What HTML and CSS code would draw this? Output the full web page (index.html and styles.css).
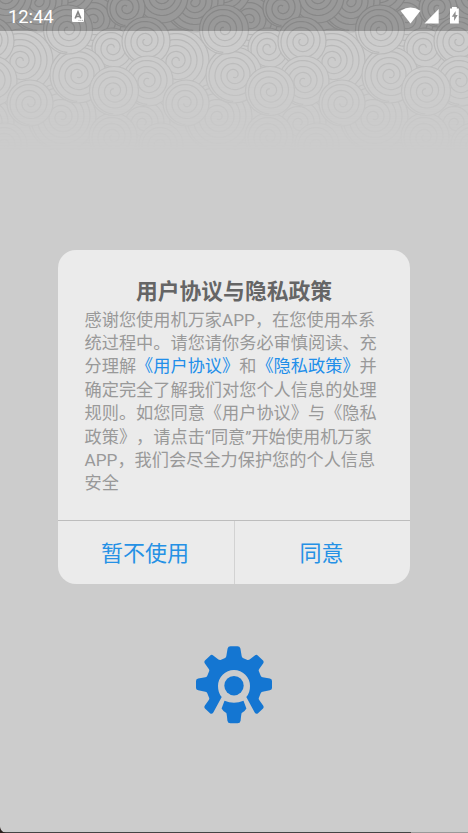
FILE: index.html
```html
<!DOCTYPE html>
<html lang="zh-CN">
<head>
<meta charset="utf-8">
<title>用户协议与隐私政策</title>
<link rel="stylesheet" href="styles.css">
</head>
<body>
<div class="screen">
  <svg class="swirls" width="468" height="160" viewBox="0 0 468 160" aria-hidden="true"></svg>
  <header class="status">
    <span class="time">12:44</span>
    <svg class="app-badge" width="12" height="13" viewBox="0 0 12 13">
      <rect width="12" height="13" rx="1" fill="#fff"/>
      <path d="M3.200 9.500 6 3 8.800 9.500M4.200 7.500h3.600" fill="none" stroke="#858585" stroke-width="1.700"/>
      <path d="M6.500 11.400h1M8.300 11.400h1M10.100 11.400h1" stroke="#999" stroke-width=".9"/>
    </svg>
    <svg class="signals" width="60" height="18" viewBox="0 0 60 18">
      <path d="M.6 3.700Q10.500-2.600 20.400 3.700L10.500 16.500Z" fill="#fff"/>
      <path d="M24.500 16.500 38.700 2V16.500Z" fill="#fff"/>
      <path d="M50 1.500h2V0h4.800v1.500h2V16.500H50Z" fill="#fff"/>
      <path d="M55.600 4 51.800 9.700h2.300v4.400l3.600-6.100h-2.100Z" fill="#909090"/>
    </svg>
  </header>
  <main class="dialog">
    <section class="content">
      <h1>用户协议与隐私政策</h1>
      <p>感谢您使用机万家APP，在您使用本系<br>统过程中。请您请你务必审慎阅读、充<br>分理解<a>《用户协议》</a>和<a>《隐私政策》</a>并<br>确定完全了解我们对您个人信息的处理<br>规则。如您同意《用户协议》与《隐私<br>政策》，请点击“同意”开始使用机万家<br>APP，我们会尽全力保护您的个人信息<br>安全</p>
    </section>
    <div class="actions">
      <button>暂不使用</button>
      <button>同意</button>
    </div>
  </main>
  <svg class="logo" width="76" height="78" viewBox="0 0 76 78" aria-hidden="true">
    <path fill="#1476d2" d="M34.500.3h7q2.300 0 2.900 2.300l1.300 7.700q.3 1.400 1.700 2l3.500 1.400q1.400.6 2.700-.2l5.200-4.100q1.700-1.200 3.200.3l4.800 4.600q1.500 1.500.3 3.200l-3.900 5.400q-.9 1.300-.2 2.700l1.600 4q.5 1.400 2 1.700l7.200 1.300q2.200.5 2.200 2.300v7q0 1.800-2.200 2.300l-7.200 1.500q-1.500.3-2 1.700l-1.600 4q-.7 1.400.2 2.700l3.900 5.400q1.200 1.700-.3 3.200l-4.800 4.600q-1.800 1.300-3.300-.7L50.300 51Q54 47 54 40A16 16 0 0 0 22 40Q22 47 25.700 51L17.300 66.600q-1.500 2-3.300.7L9.200 62.700q-1.500-1.500-.3-3.200l3.900-5.400q.9-1.300.2-2.700l-1.600-4q-.5-1.400-2-1.700L2.200 44.200Q0 43.700 0 41.900v-7q0-1.800 2.200-2.300l7.200-1.300q1.500-.3 2-1.700l1.600-4q.7-1.400-.2-2.700L8.900 17.500q-1.200-1.700.3-3.200l4.800-4.600q1.500-1.500 3.200-.3l5.200 4.100q1.300.8 2.700.2l3.500-1.400q1.400-.6 1.700-2l1.300-7.700Q32.200.3 34.500.3Z"/>
    <circle cx="38" cy="39.700" r="9.700" fill="#1476d2"/>
    <path fill="#1476d2" d="M28.500 54.800Q38 58.700 47.500 54.800L50.400 62.500Q48.800 65.500 45.700 67Q45.200 68 44.600 74.700Q44.200 77.200 41.500 77.200h-7Q31.800 77.200 31.400 74.700Q30.800 68 30.300 67Q27.200 65.500 25.600 62.500Z"/>
  </svg>
  <footer class="edge"></footer>
</div>
<script src="swirls.js"></script>
</body>
</html>
```
FILE: styles.css
```css
* { box-sizing: border-box; }
body { margin: 0; background: #ccc; font-family: Roboto, "Noto Sans CJK SC", sans-serif; }
.screen { position: relative; width: 468px; height: 833px; overflow: hidden; background: #ccc; display: flex; flex-direction: column; align-items: center; }
.swirls { position: absolute; left: 0; top: 0; -webkit-mask-image: linear-gradient(#000 10%, rgba(0,0,0,.65) 40%, rgba(0,0,0,.2) 75%, transparent 94%); mask-image: linear-gradient(#000 10%, rgba(0,0,0,.65) 40%, rgba(0,0,0,.2) 75%, transparent 94%); }
.status { position: relative; width: 100%; height: 31px; flex: none; display: flex; align-items: flex-start; padding: 6px 8px 0; background: rgba(0,0,0,.25); color: #fff; }
.time { width: 64px; font-size: 18.500px; line-height: 22px; font-weight: 400; letter-spacing: -.1px; }
.app-badge { margin-top: 3px; }
.signals { margin: 1px 0 0 auto; }
.dialog { position: relative; width: 352px; height: 333.500px; margin-top: 219px; flex: none; background: #ebebeb; border-radius: 18px; overflow: hidden; display: flex; flex-direction: column; }
.content { height: 270px; padding: 28px 0 0 26.500px; }
h1 { margin: 0 26.500px 0 0; text-align: center; font-size: 21.800px; line-height: 28px; font-weight: 700; color: #656565; }
p { margin: 2.600px 0 0; font-size: 17.200px; line-height: 23.400px; color: #999; white-space: nowrap; text-spacing-trim: space-all; }
a { color: #218eea; }
.actions { display: flex; flex: 1; border-top: 1px solid #bdbdbd; }
button { flex: 1; border: 0; padding: 3px 1.500px 0 0; margin: 0; background: none; color: #2591e5; font: 400 22px/30px Roboto, "Noto Sans CJK SC", sans-serif; }
button + button { border-left: 1px solid #d2d2d2; }
.logo { margin-top: 62px; flex: none; }
.edge { position: absolute; left: 0; bottom: 0; width: 100%; height: 7px; background: radial-gradient(circle at 7px 0, transparent 6.500px, #2b211e 7.500px) 0 0 / 6px 7px no-repeat, linear-gradient(90deg, #444 411px, #999 411px) 0 100% / 100% 1px no-repeat; }
```
FILE: swirls.js
```js
const svg = document.querySelector('.swirls');
const PERIOD = 156;
const PITCH = 6;
// Discs of one pattern tile, back to front: centre x, centre y, radius.
const discs = [
  [94, 20, 34], [67, -12, 28], [38, 2, 30], [5, -4, 27], [126, 8, 19],
  [88, 150, 30], [62, 117, 34], [143, 123, 27], [5, 145, 22], [113, 137, 24],
  [21, 61, 32], [112, 48, 20], [146, 41, 24],
  [148, 81, 25], [78, 75, 28], [68, 29.5, 24.5], [30, 103, 23], [114, 91, 24.5]
];
const spiral = (cx, cy, r) => {
  const turns = (r - 2) / PITCH;
  let d = '';
  // The spiral leaves the rim a quarter turn in.
  for (let a = 1.6; a <= turns * 2 * Math.PI; a += 0.15) {
    const q = r - PITCH * a / (2 * Math.PI);
    d += (d ? 'L' : 'M') + (cx + q * Math.cos(a)).toFixed(2) + ' ' + (cy + q * Math.sin(a)).toFixed(2);
  }
  return d;
};
let out = '<rect width="468" height="160" fill="#ccc"/>';
for (const [x, y, r] of discs) {
  for (let k = -1; k < 4; k++) {
    const cx = x + k * PERIOD;
    out += `<circle cx="${cx}" cy="${y}" r="${r}" fill="#ccc" stroke="#b4b4b4" stroke-width="1.2"/><path d="${spiral(cx, y, r)}" fill="none" stroke="#b4b4b4" stroke-width="1.2"/>`;
  }
}
svg.innerHTML = out;
```
